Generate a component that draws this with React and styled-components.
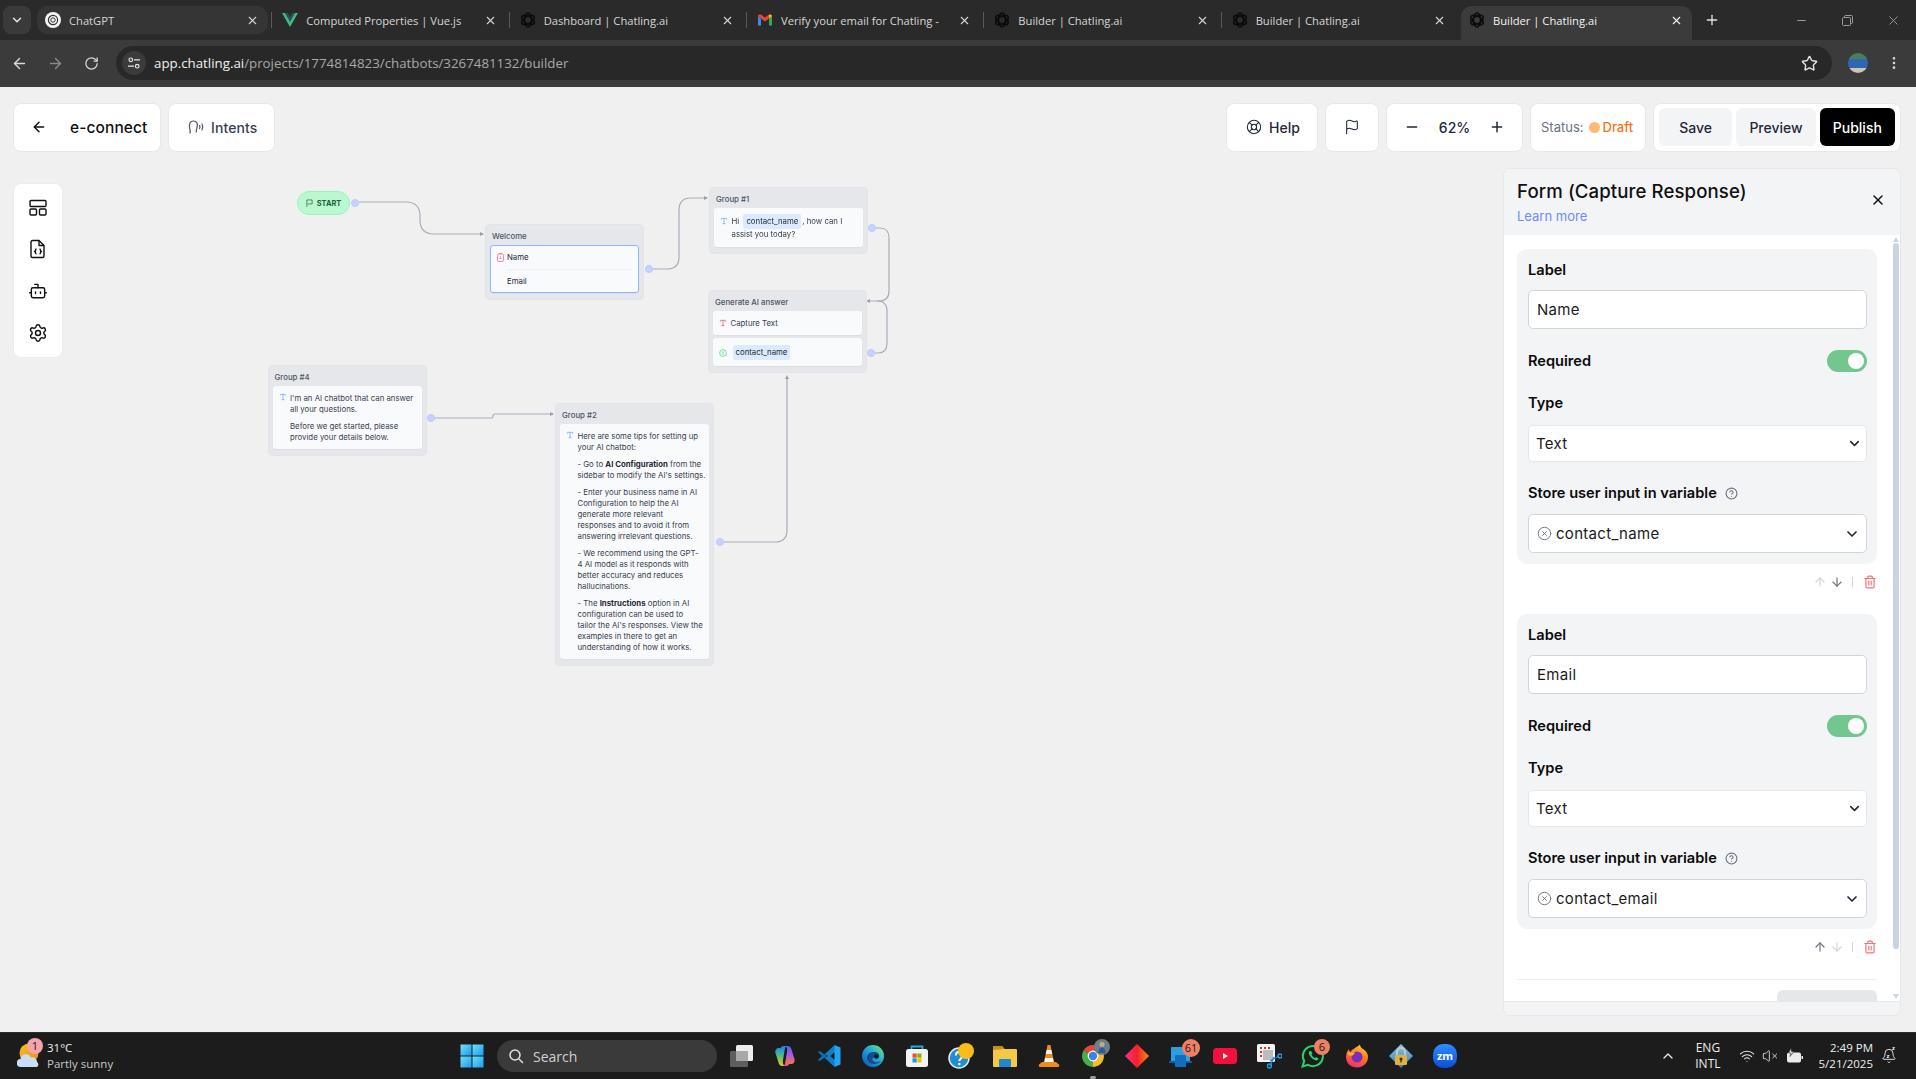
import React from 'react';
import styled, { createGlobalStyle } from 'styled-components';
import {
  ArrowLeft,
  ArrowRight,
  ArrowUp,
  ArrowDown,
  Bell,
  Bot,
  ChevronDown,
  ChevronUp,
  CircleHelp,
  CircleX,
  Flag,
  LifeBuoy,
  Minus,
  MoreVertical,
  Plus,
  RotateCw,
  Settings,
  Star,
  Trash2,
  Type,
  Wifi,
  VolumeX,
  X,
} from 'lucide-react';

const UI = `Inter, "Open Sans", sans-serif`;
const WIN = `"Open Sans", "Noto Sans", sans-serif`;

const GlobalStyle = createGlobalStyle`
  html, body { margin: 0; padding: 0; height: 100%; overflow: hidden; background: #f0f0f0; }
  * { box-sizing: border-box; }
  #root { height: 100%; }
`;

const Page = styled.div`
  display: flex;
  flex-direction: column;
  height: 100vh;
  font-family: ${UI};
`;

/* browser chrome */
const TabStrip = styled.div`
  display: flex;
  align-items: flex-start;
  height: 40px;
  padding: 6px 0 0 3px;
  background: #2a2a2a;
  font-family: ${WIN};
`;

const TabMenu = styled.div`
  display: flex;
  align-items: center;
  justify-content: center;
  width: 28px;
  height: 28px;
  margin-right: 6px;
  border-radius: 8px;
  background: #3a3a3a;
  color: #e6e6e6;
`;

const TabItem = styled.div`
  position: relative;
  display: flex;
  align-items: center;
  gap: 8px;
  width: 231.33px;
  height: ${p => (p.$active ? '34px' : '28px')};
  margin-right: 6px;
  padding: ${p => (p.$active ? '0 9px 6px 8px' : '0 9px 0 8px')};
  border-radius: ${p => (p.$active ? '10px 10px 0 0' : '10px')};
  background: ${p => (p.$active ? '#3b3b3b' : p.$hover ? '#353535' : 'transparent')};
  color: ${p => (p.$active ? '#f2f2f2' : '#d6d6d6')};
  font-size: 11.2px;
  &:after {
    content: '';
    display: ${p => (p.$sep ? 'block' : 'none')};
    position: absolute;
    right: -4px;
    top: 6px;
    width: 1px;
    height: 16px;
    background: #5a5a5a;
  }
`;

const TabTitle = styled.span`
  flex: 1;
  overflow: hidden;
  white-space: nowrap;
`;

const NewTab = styled.div`
  display: flex;
  align-items: center;
  justify-content: center;
  width: 28px;
  height: 28px;
  color: #e2e2e2;
`;

const WindowControls = styled.div`
  display: flex;
  margin-left: auto;
  margin-top: -6px;
  color: #9a9a9a;
`;

const WindowButton = styled.div`
  display: flex;
  align-items: center;
  justify-content: center;
  width: 46px;
  height: 40px;
`;

const Toolbar = styled.div`
  display: flex;
  align-items: center;
  height: 47px;
  padding: 0 0 1px 7px;
  background: #3b3b3b;
  color: #dcdcdc;
  font-family: ${WIN};
`;

const NavButton = styled.div`
  display: flex;
  align-items: center;
  justify-content: center;
  width: 24px;
  height: 24px;
  margin-right: 12px;
  color: ${p => (p.$off ? '#8a8a8a' : '#d8d8d8')};
`;

const MenuButton = styled(NavButton)`
  width: 16px;
  margin: 0 0 0 18px;
`;

const AddressBar = styled.div`
  display: flex;
  align-items: center;
  width: 1716px;
  height: 34px;
  margin-left: 1px;
  padding: 0 14px 0 6px;
  border-radius: 17px;
  background: #282828;
  font-size: 13.3px;
  color: #a8a8a8;
`;

const SiteInfo = styled.div`
  display: flex;
  align-items: center;
  justify-content: center;
  width: 24px;
  height: 24px;
  margin-right: 8px;
  border-radius: 50%;
  background: #3b3b3b;
  color: #e6e6e6;
`;

const Host = styled.span`
  color: #f1f1f1;
`;

const AddressEnd = styled.div`
  display: flex;
  margin-left: auto;
  color: #e4e4e4;
`;

const Avatar = styled.div`
  width: 20px;
  height: 20px;
  margin-left: 16px;
  border-radius: 50%;
  background: linear-gradient(180deg, #4a7d5a 0 30%, #2f66b8 30% 75%, #c9c9b0 75%);
`;

/* builder */
const Workspace = styled.div`
  flex: 1;
  display: flex;
  flex-direction: column;
  min-height: 0;
  background: #f0f0f0;
`;

const TopBar = styled.div`
  display: flex;
  gap: 7px;
  height: 64px;
  padding: 16px 15px 0 13px;
`;

const Card = styled.div`
  display: flex;
  align-items: center;
  height: 49px;
  padding-bottom: 1px;
  border: 1px solid #e8e8e8;
  border-radius: 8px;
  background: #fff;
  color: #1f2937;
  font-size: 14px;
  font-weight: 500;
`;

const BackCard = styled(Card)`
  width: 148px;
  padding-left: 17px;
  color: #111;
  font-size: 15.5px;
  letter-spacing: 0.1px;
`;

const BackName = styled.span`
  margin-left: 23px;
`;

const IntentsCard = styled(Card)`
  width: 107px;
  padding-left: 18px;
  gap: 6px;
  color: #374151;
  letter-spacing: 0.1px;
`;

const HelpCard = styled(Card)`
  width: 92px;
  margin-left: auto;
  padding-left: 19px;
  gap: 7px;
`;

const FlagCard = styled(Card)`
  width: 54px;
  justify-content: center;
`;

const ZoomCard = styled(Card)`
  width: 137px;
  justify-content: space-between;
  padding: 0 17px 1px;
  color: #1f2937;
`;

const StatusCard = styled(Card)`
  width: 116px;
  padding-left: 10px;
  font-size: 13px;
  font-weight: 400;
  color: #6b7280;
`;

const StatusDot = styled.span`
  width: 11px;
  height: 11px;
  margin: 0 3px 0 5px;
  border-radius: 50%;
  background: #fdba74;
`;

const Draft = styled.span`
  color: #f97316;
  font-weight: 500;
`;

const ActionsCard = styled(Card)`
  width: 248px;
  padding: 0 5px 1px;
  gap: 4px;
`;

const ActionButton = styled.div`
  display: flex;
  align-items: center;
  justify-content: center;
  width: ${p => p.$w}px;
  height: 38px;
  border-radius: 6px;
  background: ${p => (p.$primary ? '#000' : '#f3f4f6')};
  color: ${p => (p.$primary ? '#fff' : '#1f2937')};
  font-size: 14px;
  font-weight: 500;
`;

const Main = styled.div`
  flex: 1;
  display: flex;
  align-items: flex-start;
  padding: 17px 15px 0 13px;
`;

const Sidebar = styled.div`
  display: flex;
  flex-direction: column;
  align-items: center;
  gap: 22px;
  width: 50px;
  height: 175px;
  margin-top: 15px;
  padding-top: 15px;
  border: 1px solid #ececec;
  border-radius: 8px;
  background: #fff;
  color: #111;
`;

const Canvas = styled.div`
  position: relative;
  flex: 1;
  height: 848px;
  filter: blur(0.3px);
`;

const Edges = styled.svg`
  position: absolute;
  left: 0;
  top: 0;
  width: 100%;
  height: 100%;
  overflow: visible;
`;

const StartNode = styled.div`
  position: absolute;
  left: ${p => p.$x}px;
  top: ${p => p.$y}px;
  display: flex;
  align-items: center;
  justify-content: center;
  gap: 4px;
  width: 53px;
  height: 24px;
  border: 1px solid #9ff0bd;
  border-radius: 12px;
  background: #bbf7d0;
  color: #166534;
  font-size: 7.4px;
  font-weight: 700;
`;

const Handle = styled.div`
  position: absolute;
  left: ${p => p.$x - 4}px;
  top: ${p => p.$y - 4}px;
  width: 8px;
  height: 8px;
  border-radius: 50%;
  background: #c7d2fe;
  border: 1px solid #bcc8fb;
`;

const Group = styled.div`
  position: absolute;
  left: ${p => p.$x}px;
  top: ${p => p.$y}px;
  display: flex;
  flex-direction: column;
  gap: 3px;
  width: 159px;
  padding: 0 4px 6px;
  border: 1px solid #e2e4e8;
  border-radius: 4px;
  background: #e5e7eb;
`;

const GroupTitle = styled.div`
  height: 21px;
  margin: 0 0 -4px 2px;
  line-height: 22px;
  color: #4b5563;
  font-size: 7.8px;
  font-weight: 500;
`;

const Block = styled.div`
  position: relative;
  padding: ${p => p.$pad || '6.5px 2px 6.5px 17.5px'};
  border: ${p => (p.$selected ? '1px solid #93b4fb' : 'none')};
  border-radius: 3px;
  background: #f9fafb;
  box-shadow: 0 1px 1px rgba(0, 0, 0, 0.04);
  color: #374151;
  font-size: 7.8px;
  line-height: 11px;
  white-space: nowrap;
`;

const BlockIcon = styled.span`
  position: absolute;
  left: 6px;
  top: ${p => p.$top || 7}px;
  display: flex;
  color: ${p => p.$color};
`;

const Para = styled.p`
  margin: 0 0 6px;
  &:last-child { margin-bottom: 0; }
  b { font-weight: 700; color: #1f2937; }
`;

const Chip = styled.span`
  display: inline-block;
  height: 15px;
  margin: 0 1px 0 2px;
  padding: 0 3px;
  border-radius: 2px;
  background: #dbeafe;
  color: #1f2937;
  line-height: 15px;
`;

const FormRow = styled.div`
  height: ${p => p.$h}px;
  line-height: ${p => p.$h}px;
  color: #1f2937;
`;

const RowRule = styled.div`
  height: 1px;
  background: #f0f1f3;
`;

/* right panel */
const Panel = styled.div`
  display: flex;
  flex-direction: column;
  width: 398px;
  height: 848px;
  border: 1px solid #e5e7eb;
  border-radius: 8px;
  overflow: hidden;
  background: #fff;
`;

const PanelHead = styled.div`
  position: relative;
  flex: none;
  height: 66px;
  padding: 8px 0 0 13px;
  background: #f3f4f6;
`;

const PanelTitle = styled.div`
  color: #111;
  font-size: 18.6px;
  font-weight: 500;
  line-height: 28px;
  letter-spacing: 0.1px;
`;

const LearnMore = styled.div`
  margin-top: 2px;
  color: #6b8cfb;
  font-size: 13px;
  line-height: 18px;
`;

const CloseButton = styled.div`
  position: absolute;
  right: 14px;
  top: 23px;
  display: flex;
  color: #111;
`;

const PanelBody = styled.div`
  position: relative;
  flex: 1;
  min-height: 0;
  overflow: hidden;
  padding: 14px 23px 0 13px;
`;

const FormCard = styled.div`
  height: 315px;
  padding: 11px 10px 0 11px;
  border-radius: 10px;
  background: #f3f4f6;
`;

const FieldLabel = styled.div`
  display: flex;
  align-items: center;
  justify-content: ${p => (p.$split ? 'space-between' : 'flex-start')};
  gap: 8px;
  height: ${p => p.$h || 20}px;
  margin-top: ${p => p.$mt || 0}px;
  color: #0b0b0b;
  font-size: 14.6px;
  font-weight: 600;
`;

const Input = styled.div`
  display: flex;
  align-items: center;
  height: ${p => p.$h || 39}px;
  margin-top: ${p => p.$mt || 11}px;
  padding: 0 ${p => p.$pr || 11}px 0 ${p => p.$pl || 8}px;
  border: 1px solid ${p => (p.$soft ? '#e5e7eb' : '#d1d5db')};
  border-radius: 5px;
  background: #fff;
  color: #1b1b1b;
  font-size: 15px;
  letter-spacing: 0.3px;
`;

const InputValue = styled.span`
  flex: 1;
`;

const ClearIcon = styled.span`
  display: flex;
  margin-right: 4px;
  color: #6b7280;
`;

const Toggle = styled.div`
  position: relative;
  width: 40px;
  height: 22px;
  border-radius: 11px;
  background: #74c68f;
  &:after {
    content: '';
    position: absolute;
    right: 3px;
    top: 3px;
    width: 16px;
    height: 16px;
    border-radius: 50%;
    background: #fff;
  }
`;

const RowTools = styled.div`
  display: flex;
  align-items: center;
  justify-content: flex-end;
  height: 18px;
  margin: 9px 0 23px;
`;

const ToolIcon = styled.span`
  display: flex;
  margin-left: ${p => p.$ml || 0}px;
  color: ${p => (p.$off ? '#d1d5db' : p.$danger ? '#f87171' : '#6b7280')};
`;

const ToolRule = styled.span`
  width: 1px;
  height: 10px;
  margin: 0 10px 0 8px;
  background: #d1d5db;
`;

const BodyRule = styled.div`
  height: 1px;
  background: #eceef1;
`;

const GhostButton = styled.div`
  width: 100px;
  height: 30px;
  margin: 10px 0 0 auto;
  border-radius: 6px;
  background: #e5e7eb;
`;

const ScrollTrack = styled.div`
  position: absolute;
  right: 1px;
  top: 0;
  bottom: 0;
  display: flex;
  flex-direction: column;
  align-items: center;
  justify-content: space-between;
  width: 7px;
  padding: 2px 0;
  background: #fff;
  color: #cbd5e1;
`;

const ScrollThumb = styled.div`
  width: 6px;
  height: 706px;
  margin-bottom: 44px;
  border-radius: 3px;
  background: #c9d4e1;
`;

const Arrow = styled.span`
  width: 0;
  height: 0;
  border-left: 3.5px solid transparent;
  border-right: 3.5px solid transparent;
  ${p => (p.$down ? 'border-top: 5px solid #cbd5e1;' : 'border-bottom: 5px solid #cbd5e1;')}
`;

const PanelFoot = styled.div`
  flex: none;
  height: 14px;
  border-top: 1px solid #e5e7eb;
  background: #f3f4f6;
`;

/* taskbar */
const Taskbar = styled.div`
  display: flex;
  align-items: center;
  height: 47px;
  border-top: 1px solid #2e2e2e;
  background: #1c1c1c;
  color: #e8e8e8;
  font-family: ${WIN};
`;

const Weather = styled.div`
  display: flex;
  align-items: center;
  width: 460px;
  padding-left: 17px;
`;

const WeatherIcon = styled.div`
  position: relative;
  display: flex;
  width: 24px;
  height: 28px;
  margin-right: 6px;
`;

const WeatherText = styled.div`
  font-size: 11.5px;
  line-height: 16px;
  color: #c8c8c8;
  b { display: block; font-weight: 400; color: #f0f0f0; }
`;

const SearchBox = styled.div`
  display: flex;
  align-items: center;
  gap: 9px;
  width: 220px;
  height: 32px;
  margin: 0 2px 0 13px;
  padding-left: 11px;
  border-radius: 16px;
  background: #3a3a3a;
  font-size: 14px;
  color: #d0d0d0;
`;

const Slot = styled.div`
  position: relative;
  display: flex;
  align-items: center;
  justify-content: center;
  width: 44px;
  height: 44px;
  &:after {
    content: '';
    display: ${p => (p.$running ? 'block' : 'none')};
    position: absolute;
    bottom: -1px;
    left: 19px;
    width: 6px;
    height: 3px;
    border-radius: 2px;
    background: #9a9a9a;
  }
`;

const Badge = styled.span`
  position: absolute;
  top: ${p => p.$top ?? 5}px;
  right: ${p => p.$right ?? 4}px;
  width: ${p => p.$size || 16}px;
  height: ${p => p.$size || 16}px;
  border-radius: 50%;
  background: ${p => p.$bg || '#ee8066'};
  color: #2a1512;
  font-size: 11px;
  line-height: ${p => p.$size || 16}px;
  text-align: center;
`;

const ZoomIcon = styled.div`
  width: 24px;
  height: 24px;
  border-radius: 10px;
  background: linear-gradient(180deg, #2d8cff, #0b4fd6);
  color: #fff;
  font-size: 11px;
  font-weight: 700;
  line-height: 23px;
  text-align: center;
`;

const Tray = styled.div`
  display: flex;
  align-items: center;
  margin-left: auto;
  padding-right: 19px;
`;

const TrayStack = styled.div`
  margin: ${p => p.$m || 0};
  font-size: ${p => p.$size || 12}px;
  line-height: 16px;
  text-align: ${p => p.$align || 'center'};
  color: #ececec;
`;

const TrayIcon = styled.span`
  position: relative;
  display: flex;
  margin-left: ${p => p.$ml || 0}px;
`;

const Snooze = styled.span`
  position: absolute;
  left: ${p => p.$x}px;
  top: ${p => p.$y}px;
  font-size: ${p => p.$size}px;
  font-weight: 700;
  line-height: 1;
  color: #ececec;
`;

/* drawings */
const ChatGptIcon = () => (
  <svg width="16" height="16" viewBox="0 0 16 16">
    <circle cx="8" cy="8" r="8" fill="#f4f4f4" />
    <circle cx="8" cy="8" r="4.6" fill="none" stroke="#333" strokeWidth="1.2" />
    <circle cx="8" cy="8" r="2.2" fill="none" stroke="#333" strokeWidth="1" />
  </svg>
);

const VueIcon = () => (
  <svg width="16" height="16" viewBox="0 0 16 16">
    <path d="M0 1h3.2L8 9.4 12.8 1H16L8 15z" fill="#41b883" />
    <path d="M3.2 1h2.6L8 4.9 10.2 1h2.6L8 9.4z" fill="#34495e" />
  </svg>
);

const ChatlingIcon = () => (
  <svg width="16" height="16" viewBox="0 0 16 16" fill="none" stroke="#0c0c0c" strokeWidth="1.6">
    <ellipse cx="8" cy="8" rx="3.6" ry="7" />
    <ellipse cx="8" cy="8" rx="3.6" ry="7" transform="rotate(60 8 8)" />
    <ellipse cx="8" cy="8" rx="3.6" ry="7" transform="rotate(120 8 8)" />
  </svg>
);

const GmailIcon = () => (
  <svg width="16" height="16" viewBox="0 0 16 16">
    <path d="M1 4v9.5h3V7z" fill="#4285f4" />
    <path d="M15 4v9.5h-3V7z" fill="#34a853" />
    <path d="M1 4.2 8 9.4l4-3V2.6L8 5.6 4 2.6 2.6 2.4C1.6 2.4 1 3.2 1 4.2z" fill="#ea4335" />
    <path d="M12 2.6v3.8l3-2.2C15 3 14 2 12 2.6z" fill="#fbbc04" />
  </svg>
);

const FlagSmall = () => (
  <svg width="7" height="8" viewBox="0 0 8 9" fill="none" stroke="#166534" strokeWidth="0.8">
    <path d="M1 9V1h6v4.5H2" />
  </svg>
);

const IntentsIcon = () => (
  <svg width="18" height="18" viewBox="0 0 18 18" fill="none" stroke="#4b5563" strokeWidth="1.2" strokeLinecap="round">
    <path d="M3 15c.5-2 .2-3-.3-4.500C2 8 2.200 3 6.500 3c3.600 0 4.400 3.200 3.600 6-.4 1.600-1 2.600-.8 5" />
    <path d="M12.600 7.500c.5 1 .5 2 0 3M15 6c.9 1.800.9 4 0 6" />
  </svg>
);

const LayoutIcon = () => (
  <svg width="18" height="18" viewBox="0 0 18 18" fill="none" stroke="#111" strokeWidth="1.4">
    <rect x="1" y="1.500" width="16" height="6" rx="1" />
    <rect x="1" y="10" width="6.500" height="6" rx="1" />
    <rect x="10.500" y="10" width="6.500" height="6" rx="1" />
  </svg>
);

const FileCodeIcon = () => (
  <svg width="18" height="20" viewBox="0 0 18 20" fill="none" stroke="#111" strokeWidth="1.4" strokeLinejoin="round">
    <path d="M3.500 1.500h6.500l5 5v10.500a1.500 1.500 0 0 1-1.500 1.500h-10a1.500 1.500 0 0 1-1.500-1.500v-14a1.500 1.500 0 0 1 1.500-1.500z" />
    <path d="M10 1.500v5h5" />
    <path d="M7.500 10c-1 0-1 .7-1 1.400s-.5 1-1 1.100c.5.100 1 .4 1 1.100s0 1.400 1 1.400M10.500 10c1 0 1 .7 1 1.400s.5 1 1 1.100c-.5.100-1 .4-1 1.100s0 1.400-1 1.400" />
  </svg>
);

const FormGlyph = () => (
  <svg width="7" height="9" viewBox="0 0 7 9" fill="none" stroke="#f87186" strokeWidth="0.8">
    <rect x="0.500" y="1" width="6" height="7.500" rx="1.500" />
    <path d="M2.200 1V.4h2.600V1M2.500 5.500h2M3.500 3.500v2" />
  </svg>
);

const InfoGlyph = () => (
  <svg width="8" height="8" viewBox="0 0 8 8" fill="none" stroke="#4ade80" strokeWidth="0.8">
    <circle cx="4" cy="4" r="3.400" />
    <path d="M4 2v4" />
  </svg>
);

const SiteTune = () => (
  <svg width="14" height="14" viewBox="0 0 14 14" fill="none" stroke="currentColor" strokeWidth="1.200">
    <circle cx="3.800" cy="3.800" r="1.800" />
    <path d="M7 3.800h6M1 10.200h6" />
    <circle cx="10.200" cy="10.200" r="1.800" />
  </svg>
);

const RestoreIcon = () => (
  <svg width="11" height="11" viewBox="0 0 11 11" fill="none" stroke="currentColor">
    <rect x="0.500" y="2.500" width="8" height="8" rx="1" />
    <path d="M2.500 2.500v-1a1 1 0 0 1 1-1h6a1 1 0 0 1 1 1v6a1 1 0 0 1-1 1h-1" />
  </svg>
);

const WeatherArt = () => (
  <svg width="24" height="28" viewBox="0 0 24 28">
    <defs>
      <linearGradient id="sun" x1="0" y1="0" x2="1" y2="1">
        <stop offset="0" stopColor="#fbbf24" />
        <stop offset="1" stopColor="#f08a12" />
      </linearGradient>
    </defs>
    <circle cx="12" cy="11" r="9.500" fill="url(#sun)" />
    <path d="M4 25a4 4 0 0 1-.5-8 5.500 5.500 0 0 1 10.500-1.500 4.500 4.500 0 0 1 6 4.500 3 3 0 0 1 0 5z" fill="#c7def7" />
  </svg>
);

const WindowsLogo = () => (
  <svg width="24" height="24" viewBox="0 0 24 24">
    <defs>
      <linearGradient id="winb" x1="0" y1="0" x2="1" y2="1">
        <stop offset="0" stopColor="#6fe0ff" />
        <stop offset="1" stopColor="#1a9be8" />
      </linearGradient>
    </defs>
    <rect x="0.500" y="0.500" width="11" height="11" fill="url(#winb)" />
    <rect x="12.500" y="0.500" width="11" height="11" fill="url(#winb)" />
    <rect x="0.500" y="12.500" width="11" height="11" fill="url(#winb)" />
    <rect x="12.500" y="12.500" width="11" height="11" fill="url(#winb)" />
  </svg>
);

const TaskViewIcon = () => (
  <svg width="24" height="24" viewBox="0 0 24 24">
    <rect x="1" y="7" width="18" height="16" rx="1.500" fill="#5e5e5e" />
    <rect x="7" y="1" width="17" height="16" rx="1.500" fill="#ededed" />
    <rect x="7" y="7" width="12" height="10" fill="#a8a8a8" />
  </svg>
);

const CopilotIcon = () => (
  <svg width="24" height="24" viewBox="0 0 24 24">
    <defs>
      <linearGradient id="copl" x1="0" y1="0" x2="0" y2="1">
        <stop offset="0" stopColor="#1f8ee8" />
        <stop offset="0.500" stopColor="#5cc46a" />
        <stop offset="1" stopColor="#f5c023" />
      </linearGradient>
      <linearGradient id="copr" x1="0" y1="0" x2="0" y2="1">
        <stop offset="0" stopColor="#3b6fe6" />
        <stop offset="0.500" stopColor="#b256e0" />
        <stop offset="1" stopColor="#f0793c" />
      </linearGradient>
    </defs>
    <path d="M14.500 2C17 2 18 3.500 18.500 5.500L21.500 15C22.200 18 20.500 20 18 20H12L14 8C14.300 5 14.500 3 11 2z" fill="url(#copr)" />
    <path d="M9.500 22C7 22 6 20.500 5.500 18.500L2.500 9C1.800 6 3.500 4 6 4H12L10 16C9.700 19 9.500 21 13 22z" fill="url(#copl)" />
    <path d="M11 2H14.500C13 2.200 12 3.200 11.600 5H7C8 3 9 2 11 2z" fill="#2f86ea" />
    <path d="M13 22H9.500C11 21.800 12 20.800 12.400 19H17C16 21 15 22 13 22z" fill="#ee5a8e" />
  </svg>
);

const VsCodeIcon = () => (
  <svg width="24" height="24" viewBox="0 0 24 24">
    <path d="M1 8.200 3 7l4.500 3.400L9.700 12 7.500 13.600 3 17l-2-1.200L5 12z" fill="#0a6fb8" />
    <path d="M7.500 10.400 17.500 1 19 7.200 13 12l6 4.800L17.500 23 7.500 13.600 11 12z" fill="#0d80cc" />
    <path d="M17.500 1 23.500 3.500v17L17.500 23z" fill="#22a2ef" />
  </svg>
);

const EdgeIcon = () => (
  <svg width="24" height="24" viewBox="0 0 24 24">
    <defs>
      <linearGradient id="edg" x1="0.900" y1="0.100" x2="0.100" y2="0.900">
        <stop offset="0" stopColor="#5fe08a" />
        <stop offset="0.450" stopColor="#20a8d8" />
        <stop offset="1" stopColor="#0f5fb8" />
      </linearGradient>
    </defs>
    <circle cx="12" cy="12" r="11" fill="url(#edg)" />
    <path d="M12.500 8C8 8 6 11 6 14c0 3 3 6 7 6 3 0 5.500-1 7-3-2 1-4 1.500-6 1-2-.5-3-2-2.500-3.500.300-1 2-1 5-1 1.500 0 2-1 1.500-2.500C17.500 8.500 15 8 12.500 8z" fill="#124b8f" />
    <circle cx="15.500" cy="12.500" r="2.300" fill="#1c1c1c" />
  </svg>
);

const StoreIcon = () => (
  <svg width="24" height="24" viewBox="0 0 24 24">
    <path d="M6.500 6V2.500h11V6" fill="none" stroke="#22a7e0" strokeWidth="1.800" />
    <rect x="1" y="5" width="22" height="18" rx="2.500" fill="#f2f2f2" />
    <rect x="7.500" y="9.500" width="4.200" height="4.200" fill="#f25022" />
    <rect x="12.300" y="9.500" width="4.200" height="4.200" fill="#7fba00" />
    <rect x="7.500" y="14.300" width="4.200" height="4.200" fill="#00a4ef" />
    <rect x="12.300" y="14.300" width="4.200" height="4.200" fill="#ffb900" />
  </svg>
);

const HelpTaskIcon = () => (
  <svg width="26" height="26" viewBox="0 0 26 26">
    <circle cx="11" cy="15" r="10" fill="#1e8fd0" stroke="#e6eef4" strokeWidth="1.500" />
    <path d="M7.800 12.500c0-4.600 7-4.600 7 0 0 2.800-3.500 2.600-3.500 5.500" fill="none" stroke="#fff" strokeWidth="2" />
    <circle cx="11.300" cy="21" r="1.300" fill="#fff" />
    <circle cx="18" cy="8" r="8" fill="#fbbc1a" />
  </svg>
);

const FolderIcon = () => (
  <svg width="24" height="24" viewBox="0 0 24 24">
    <path d="M0 3a1 1 0 0 1 1-1h8l2.500 3H23a1 1 0 0 1 1 1v16a1 1 0 0 1-1 1H1a1 1 0 0 1-1-1z" fill="#f6c945" />
    <path d="M0 3a1 1 0 0 1 1-1h8l2.500 3-11.500 1z" fill="#c98d18" />
    <rect x="6" y="15" width="12" height="8" rx="1" fill="#1e87d6" />
  </svg>
);

const VlcIcon = () => (
  <svg width="24" height="24" viewBox="0 0 24 24">
    <path d="M10.500 1h3l1 5h-5z" fill="#f28c16" />
    <path d="M9.500 6h5l.8 4H8.700z" fill="#f5f5f5" />
    <path d="M8.700 10h6.600l.8 4H7.900z" fill="#f28c16" />
    <path d="M7.900 14h8.200l.8 4H7.100z" fill="#f5f5f5" />
    <path d="M1.500 21 5 18h14l3.500 3-1 2h-19z" fill="#f28c16" />
  </svg>
);

const ChromeIcon = () => (
  <svg width="24" height="24" viewBox="0 0 24 24" overflow="visible">
    <path d="M12 12 2.500 6.500A11 11 0 0 1 21.500 6.500z" fill="#e8453c" />
    <path d="M12 12 21.500 6.500A11 11 0 0 1 12 23z" fill="#f9bb2d" />
    <path d="M12 12 12 23A11 11 0 0 1 2.500 6.500z" fill="#4aae48" />
    <circle cx="12" cy="12" r="5.400" fill="#fff" />
    <circle cx="12" cy="12" r="4.200" fill="#3b82e8" />
    <circle cx="21" cy="3" r="8" fill="#6f7f88" />
    <circle cx="21" cy="0.500" r="2.500" fill="#c9a88a" />
    <path d="M17.500 9c0-4 1.500-5.500 3.500-5.500s3.500 1.500 3.500 5.500z" fill="#2c5aa0" />
  </svg>
);

const DiamondIcon = () => (
  <svg width="24" height="24" viewBox="0 0 24 24">
    <defs>
      <linearGradient id="dia" x1="0" y1="0" x2="1" y2="0">
        <stop offset="0" stopColor="#f0358f" />
        <stop offset="0.500" stopColor="#f4202c" />
        <stop offset="1" stopColor="#fb8a12" />
      </linearGradient>
    </defs>
    <path d="M12 0 24 12 12 24 0 12z" fill="url(#dia)" />
  </svg>
);

const PhoneLinkIcon = () => (
  <svg width="24" height="24" viewBox="0 0 24 24">
    <rect x="2" y="3" width="19" height="15" rx="1" fill="#2aa0de" />
    <rect x="0" y="17" width="23" height="2" rx="1" fill="#0d5fa8" />
    <rect x="6" y="11" width="11" height="12" rx="1" fill="#0f6fbe" />
  </svg>
);

const YoutubeIcon = () => (
  <svg width="24" height="24" viewBox="0 0 24 24">
    <rect x="0" y="4" width="24" height="16" rx="3.500" fill="#f50f3c" />
    <path d="M10 9v6l5-3z" fill="#fff" />
  </svg>
);

const SnipIcon = () => (
  <svg width="26" height="26" viewBox="0 0 26 26">
    <rect x="1" y="1" width="18" height="18" rx="1.500" fill="#f2f2f2" />
    <path d="M4 4h2v2H4zM8 4h2v2H8zM12 4h2v2h-2zM4 8h2v2H4zM4 12h2v2H4z" fill="#d9362b" />
    <rect x="7" y="7" width="10" height="10" fill="#b8bcc0" />
    <path d="M14 23 18 14M23 13l-9 5" stroke="#1e7fd6" strokeWidth="1.300" />
    <circle cx="13.500" cy="23" r="2" fill="none" stroke="#1e9fe6" strokeWidth="1.400" />
    <circle cx="24" cy="13" r="2" fill="none" stroke="#1e9fe6" strokeWidth="1.400" />
  </svg>
);

const WhatsappIcon = () => (
  <svg width="24" height="24" viewBox="0 0 24 24">
    <path d="M1.500 22.500 3.200 17A10 10 0 1 1 7 20.800z" fill="none" stroke="#25d366" strokeWidth="2" />
    <path d="M8.500 7c-1 1-1 3 .5 5s3.500 4 6 4.500c1.500 0 2.500-1 2.500-2l-2.500-1.500-1 1c-1.500-.5-3-2-3.500-3.500l1-1L10 7z" fill="#25d366" />
  </svg>
);

const FirefoxIcon = () => (
  <svg width="24" height="24" viewBox="0 0 24 24">
    <defs>
      <linearGradient id="ffx" x1="0.800" y1="0" x2="0.400" y2="1">
        <stop offset="0" stopColor="#ffcf3a" />
        <stop offset="0.500" stopColor="#ff7a1f" />
        <stop offset="1" stopColor="#ef2f6b" />
      </linearGradient>
    </defs>
    <path d="M12 23.500C5.500 23.500 1 19 1 13 1 9.500 2.500 6.500 4 5c0 1.500.5 2.500 1.500 3C7 5 11 4 15 .500c0 2.500 1.500 3.500 3 4.500 3 2 5 4.500 5 8 0 6-5 10.500-11 10.500z" fill="url(#ffx)" />
    <circle cx="12" cy="13" r="5.500" fill="#7b2fb8" />
    <path d="M2 8.500h8l-2 3H4z" fill="#ffb03a" />
  </svg>
);

const LockRocketIcon = () => (
  <svg width="24" height="24" viewBox="0 0 24 24">
    <defs>
      <linearGradient id="lck" x1="0" y1="0" x2="0" y2="1">
        <stop offset="0" stopColor="#8fc4e4" />
        <stop offset="1" stopColor="#2f7fb8" />
      </linearGradient>
    </defs>
    <path d="M12 0 24 12 12 24 0 12z" fill="url(#lck)" />
    <path d="M8 11V8a4 4 0 0 1 8 0v3" fill="none" stroke="#c7ccd1" strokeWidth="1.800" />
    <rect x="6" y="11" width="12" height="10" rx="1.200" fill="#e0b13c" />
    <circle cx="12" cy="15" r="1.500" fill="#3a2c0c" />
    <rect x="11.400" y="15" width="1.200" height="3.500" fill="#3a2c0c" />
  </svg>
);

const BatteryIcon = () => (
  <svg width="16" height="16" viewBox="0 0 16 16">
    <rect x="0.500" y="5" width="13" height="9" rx="1.200" fill="#ececec" stroke="#ececec" />
    <rect x="14.500" y="8" width="1.500" height="3" fill="#ececec" />
    <path d="M4 0 1.500 5h2.500l-1 3.500L7 3.500H4.500z" fill="#ececec" stroke="#1c1c1c" strokeWidth="0.600" />
  </svg>
);

const tabs = [
  { title: 'ChatGPT', icon: <ChatGptIcon />, hover: true, sep: true },
  { title: 'Computed Properties | Vue.js', icon: <VueIcon />, sep: true },
  { title: 'Dashboard | Chatling.ai', icon: <ChatlingIcon />, sep: true },
  { title: 'Verify your email for Chatling -', icon: <GmailIcon />, sep: true },
  { title: 'Builder | Chatling.ai', icon: <ChatlingIcon />, sep: true },
  { title: 'Builder | Chatling.ai', icon: <ChatlingIcon /> },
  { title: 'Builder | Chatling.ai', icon: <ChatlingIcon />, active: true },
];

const dock = [
  { icon: <TaskViewIcon /> },
  { icon: <CopilotIcon /> },
  { icon: <VsCodeIcon /> },
  { icon: <EdgeIcon /> },
  { icon: <StoreIcon /> },
  { icon: <HelpTaskIcon /> },
  { icon: <FolderIcon /> },
  { icon: <VlcIcon /> },
  { icon: <ChromeIcon />, running: true },
  { icon: <DiamondIcon /> },
  { icon: <PhoneLinkIcon />, badge: '61', badgeSize: 18, badgeRight: 3 },
  { icon: <YoutubeIcon /> },
  { icon: <SnipIcon /> },
  { icon: <WhatsappIcon />, badge: '6', badgeSize: 16, badgeRight: 5 },
  { icon: <FirefoxIcon /> },
  { icon: <LockRocketIcon /> },
  { icon: <ZoomIcon>zm</ZoomIcon> },
];

const forms = [
  { label: 'Name', variable: 'contact_name', upOff: true },
  { label: 'Email', variable: 'contact_email', downOff: true },
];

// canvas origin sits at 63,168 in the page
const edgePaths = [
  'M296 34 H343 Q357 34 357 48 V52 Q357 66 371 66 H420',
  'M590 101 H604 Q616 101 616 89 V42 Q616 30 628 30 H644',
  'M813 60 H817 Q826 60 826 70 V123 Q826 133 816 133 H805',
  'M812 185 H815 Q824 185 824 175 V143 Q824 133 814 133',
  'M661 374 H712 Q724 374 724 362 V211',
  'M372 250 H429 Q430 250 430 248 Q430 246 432 246 H490',
];

const arrowHeads = ['421,66 417,64 417,68', '645,30 641,28 641,32', '803,133 807,131 807,135', '724,207 722,211 726,211', '491,246 487,244 487,248'];

function FlowCanvas() {
  return (
    <Canvas>
      <Edges>
        {edgePaths.map(d => (
          <path key={d} d={d} fill="none" stroke="#a8adb9" strokeWidth="1.200" />
        ))}
        {arrowHeads.map(points => (
          <polygon key={points} points={points} fill="#9aa0ad" />
        ))}
      </Edges>

      <StartNode $x={234} $y={23}>
        <FlagSmall /> START
      </StartNode>
      <Handle $x={292} $y={35} />

      <Group $x={422} $y={56}>
        <GroupTitle>Welcome</GroupTitle>
        <Block $selected $pad="0 6px 0 16px">
          <BlockIcon $top={7} $color="#f87186">
            <FormGlyph />
          </BlockIcon>
          <FormRow $h={23}>Name</FormRow>
          <RowRule />
          <FormRow $h={22}>Email</FormRow>
        </Block>
      </Group>
      <Handle $x={586} $y={101} />

      <Group $x={646} $y={19}>
        <GroupTitle>Group #1</GroupTitle>
        <Block $pad="6px 2px 7px 17.5px">
          <BlockIcon $top={9} $color="#60a5fa">
            <Type size={8} strokeWidth={2} />
          </BlockIcon>
          Hi <Chip>contact_name</Chip>, how can I
          <br />
          assist you today?
        </Block>
      </Group>
      <Handle $x={809} $y={60} />

      <Group $x={645} $y={122}>
        <GroupTitle>Generate AI answer</GroupTitle>
        <Block $pad="7px 4px 6px 17.5px">
          <BlockIcon $top={8} $color="#f43f5e">
            <Type size={8} strokeWidth={2} />
          </BlockIcon>
          Capture Text
        </Block>
        <Block $pad="7px 4px 6px 17.5px">
          <BlockIcon $top={11} $color="#4ade80">
            <InfoGlyph />
          </BlockIcon>
          <Chip>contact_name</Chip>
        </Block>
      </Group>
      <Handle $x={808} $y={185} />

      <Group $x={204.5} $y={197}>
        <GroupTitle>Group #4</GroupTitle>
        <Block>
          <BlockIcon $color="#60a5fa">
            <Type size={8} strokeWidth={2} />
          </BlockIcon>
          <Para>
            I'm an AI chatbot that can answer
            <br />
            all your questions.
          </Para>
          <Para>
            Before we get started, please
            <br />
            provide your details below.
          </Para>
        </Block>
      </Group>
      <Handle $x={368} $y={250} />

      <Group $x={492} $y={235}>
        <GroupTitle>Group #2</GroupTitle>
        <Block>
          <BlockIcon $color="#60a5fa">
            <Type size={8} strokeWidth={2} />
          </BlockIcon>
          <Para>
            Here are some tips for setting up
            <br />
            your AI chatbot:
          </Para>
          <Para>
            - Go to <b>AI Configuration</b> from the
            <br />
            sidebar to modify the AI's settings.
          </Para>
          <Para>
            - Enter your business name in AI
            <br />
            Configuration to help the AI
            <br />
            generate more relevant
            <br />
            responses and to avoid it from
            <br />
            answering irrelevant questions.
          </Para>
          <Para>
            - We recommend using the GPT-
            <br />
            4 AI model as it responds with
            <br />
            better accuracy and reduces
            <br />
            hallucinations.
          </Para>
          <Para>
            - The <b>Instructions</b> option in AI
            <br />
            configuration can be used to
            <br />
            tailor the AI's responses. View the
            <br />
            examples in there to get an
            <br />
            understanding of how it works.
          </Para>
        </Block>
      </Group>
      <Handle $x={657} $y={374} />
    </Canvas>
  );
}

function FormEntry({ form }) {
  return (
    <>
      <FormCard>
        <FieldLabel>Label</FieldLabel>
        <Input $mt={10}>
          <InputValue>{form.label}</InputValue>
        </Input>
        <FieldLabel $split $h={22} $mt={21}>
          Required
          <Toggle />
        </FieldLabel>
        <FieldLabel $mt={21}>Type</FieldLabel>
        <Input $h={37} $mt={12} $soft $pl={7} $pr={4}>
          <InputValue>Text</InputValue>
          <ChevronDown size={15} strokeWidth={2.500} color="#1f2937" />
        </Input>
        <FieldLabel $mt={21}>
          Store user input in variable
          <CircleHelp size={13} color="#6b7280" />
        </FieldLabel>
        <Input $mt={11} $pl={8} $pr={6}>
          <ClearIcon>
            <CircleX size={15} strokeWidth={1.500} />
          </ClearIcon>
          <InputValue>{form.variable}</InputValue>
          <ChevronDown size={16} strokeWidth={2.500} color="#1f2937" />
        </Input>
      </FormCard>
      <RowTools>
        <ToolIcon $off={form.upOff}>
          <ArrowUp size={14} />
        </ToolIcon>
        <ToolIcon $ml={3} $off={form.downOff}>
          <ArrowDown size={14} />
        </ToolIcon>
        <ToolRule />
        <ToolIcon $danger>
          <Trash2 size={14} />
        </ToolIcon>
      </RowTools>
    </>
  );
}

export default function App() {
  return (
    <Page>
      <GlobalStyle />
      <TabStrip>
        <TabMenu>
          <ChevronDown size={14} strokeWidth={2.500} />
        </TabMenu>
        {tabs.map((tab, i) => (
          <TabItem key={i} $active={tab.active} $hover={tab.hover} $sep={tab.sep}>
            {tab.icon}
            <TabTitle>{tab.title}</TabTitle>
            <X size={13} />
          </TabItem>
        ))}
        <NewTab>
          <Plus size={16} strokeWidth={2} />
        </NewTab>
        <WindowControls>
          <WindowButton>
            <Minus size={13} />
          </WindowButton>
          <WindowButton>
            <RestoreIcon />
          </WindowButton>
          <WindowButton>
            <X size={15} strokeWidth={1.500} />
          </WindowButton>
        </WindowControls>
      </TabStrip>

      <Toolbar>
        <NavButton>
          <ArrowLeft size={17} />
        </NavButton>
        <NavButton $off>
          <ArrowRight size={17} />
        </NavButton>
        <NavButton>
          <RotateCw size={15} />
        </NavButton>
        <AddressBar>
          <SiteInfo>
            <SiteTune />
          </SiteInfo>
          <span>
            <Host>app.chatling.ai</Host>/projects/1774814823/chatbots/3267481132/builder
          </span>
          <AddressEnd>
            <Star size={17} />
          </AddressEnd>
        </AddressBar>
        <Avatar />
        <MenuButton>
          <MoreVertical size={18} />
        </MenuButton>
      </Toolbar>

      <Workspace>
        <TopBar>
          <BackCard>
            <ArrowLeft size={16} strokeWidth={2.200} />
            <BackName>e-connect</BackName>
          </BackCard>
          <IntentsCard>
            <IntentsIcon />
            Intents
          </IntentsCard>
          <HelpCard>
            <LifeBuoy size={16} strokeWidth={1.600} />
            Help
          </HelpCard>
          <FlagCard>
            <Flag size={16} strokeWidth={1.600} />
          </FlagCard>
          <ZoomCard>
            <Minus size={16} strokeWidth={2.200} />
            62%
            <Plus size={16} strokeWidth={2.200} />
          </ZoomCard>
          <StatusCard>
            Status:
            <StatusDot />
            <Draft>Draft</Draft>
          </StatusCard>
          <ActionsCard>
            <ActionButton $w={74}>Save</ActionButton>
            <ActionButton $w={80}>Preview</ActionButton>
            <ActionButton $w={76} $primary>
              Publish
            </ActionButton>
          </ActionsCard>
        </TopBar>

        <Main>
          <Sidebar>
            <LayoutIcon />
            <FileCodeIcon />
            <Bot size={20} strokeWidth={1.700} />
            <Settings size={20} strokeWidth={1.700} />
          </Sidebar>
          <FlowCanvas />
          <Panel>
            <PanelHead>
              <PanelTitle>Form (Capture Response)</PanelTitle>
              <LearnMore>Learn more</LearnMore>
              <CloseButton>
                <X size={16} strokeWidth={2.200} />
              </CloseButton>
            </PanelHead>
            <PanelBody>
              {forms.map(form => (
                <FormEntry key={form.label} form={form} />
              ))}
              <BodyRule />
              <GhostButton />
              <ScrollTrack>
                <Arrow />
                <ScrollThumb />
                <Arrow $down />
              </ScrollTrack>
            </PanelBody>
            <PanelFoot />
          </Panel>
        </Main>
      </Workspace>

      <Taskbar>
        <Weather>
          <WeatherIcon>
            <WeatherArt />
            <Badge $top={-4} $right={-2} $bg="#f5a3ad">
              1
            </Badge>
          </WeatherIcon>
          <WeatherText>
            <b>31°C</b>
            Partly sunny
          </WeatherText>
        </Weather>
        <WindowsLogo />
        <SearchBox>
          <svg width="16" height="16" viewBox="0 0 16 16" fill="none" stroke="#e0e0e0" strokeWidth="1.500">
            <circle cx="7" cy="7" r="5" />
            <path d="M11 11l4 4" />
          </svg>
          Search
        </SearchBox>
        {dock.map((item, i) => (
          <Slot key={i} $running={item.running}>
            {item.icon}
            {item.badge && (
              <Badge $size={item.badgeSize} $right={item.badgeRight}>
                {item.badge}
              </Badge>
            )}
          </Slot>
        ))}
        <Tray>
          <ChevronUp size={16} />
          <TrayStack $m="0 0 0 19px">
            ENG
            <br />
            INTL
          </TrayStack>
          <TrayIcon $ml={18}>
            <Wifi size={16} strokeWidth={1.600} />
          </TrayIcon>
          <TrayIcon $ml={7}>
            <VolumeX size={16} strokeWidth={1.300} />
          </TrayIcon>
          <TrayIcon $ml={9}>
            <BatteryIcon />
          </TrayIcon>
          <TrayStack $m="0 0 0 16px" $align="right" $size={11.5}>
            2:49 PM
            <br />
            5/21/2025
          </TrayStack>
          <TrayIcon $ml={8}>
            <Bell size={16} strokeWidth={1.400} />
            <Snooze $x={5.500} $y={5} $size={6}>
              z
            </Snooze>
            <Snooze $x={11} $y={-3} $size={6}>
              z
            </Snooze>
          </TrayIcon>
        </Tray>
      </Taskbar>
    </Page>
  );
}
